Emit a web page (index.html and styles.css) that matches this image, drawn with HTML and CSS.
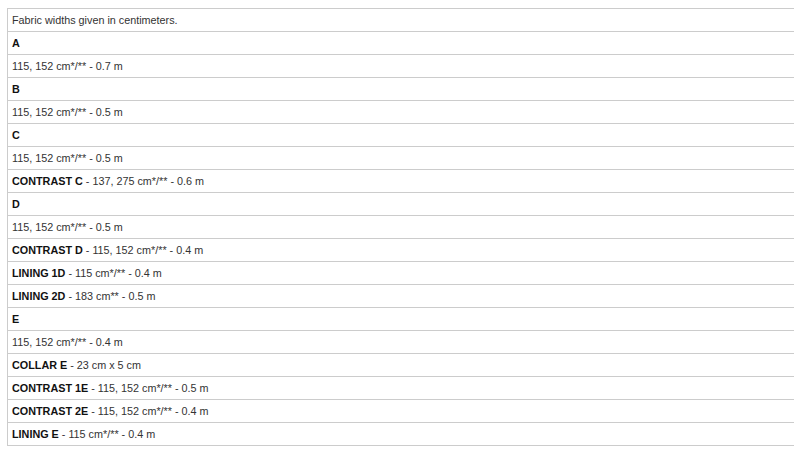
FILE: index.html
```html
<!DOCTYPE html>
<html>
<head>
<meta charset="utf-8">
<link rel="stylesheet" href="styles.css">
</head>
<body>
<table class="fabric">
<tr><td>Fabric widths given in centimeters.</td></tr>
<tr><td><b>A</b></td></tr>
<tr><td>115, 152 cm*/** - 0.7 m</td></tr>
<tr><td><b>B</b></td></tr>
<tr><td>115, 152 cm*/** - 0.5 m</td></tr>
<tr><td><b>C</b></td></tr>
<tr><td>115, 152 cm*/** - 0.5 m</td></tr>
<tr><td><b>CONTRAST C</b> - 137, 275 cm*/** - 0.6 m</td></tr>
<tr><td><b>D</b></td></tr>
<tr><td>115, 152 cm*/** - 0.5 m</td></tr>
<tr><td><b>CONTRAST D</b> - 115, 152 cm*/** - 0.4 m</td></tr>
<tr><td><b>LINING 1D</b> - 115 cm*/** - 0.4 m</td></tr>
<tr><td><b>LINING 2D</b> - 183 cm** - 0.5 m</td></tr>
<tr><td><b>E</b></td></tr>
<tr><td>115, 152 cm*/** - 0.4 m</td></tr>
<tr><td><b>COLLAR E</b> - 23 cm x 5 cm</td></tr>
<tr><td><b>CONTRAST 1E</b> - 115, 152 cm*/** - 0.5 m</td></tr>
<tr><td><b>CONTRAST 2E</b> - 115, 152 cm*/** - 0.4 m</td></tr>
<tr><td><b>LINING E</b> - 115 cm*/** - 0.4 m</td></tr>
</table>
</body>
</html>
```
FILE: styles.css
```css
html, body {
  background: #fff;
}
body {
  margin: 8px 8px 0 7px;
  font-family: "Liberation Sans", Arial, sans-serif;
  font-size: 10.8px;
  color: #333;
}
.fabric {
  width: 788px;
  border-collapse: collapse;
  border: 1px solid #ccc;
}
.fabric td {
  border: 1px solid #ccc;
  height: 23px;
  padding: 0 4px;
  box-sizing: border-box;
  line-height: 14px;
  vertical-align: middle;
}
.fabric b {
  color: #111;
  font-weight: bold;
}
```
